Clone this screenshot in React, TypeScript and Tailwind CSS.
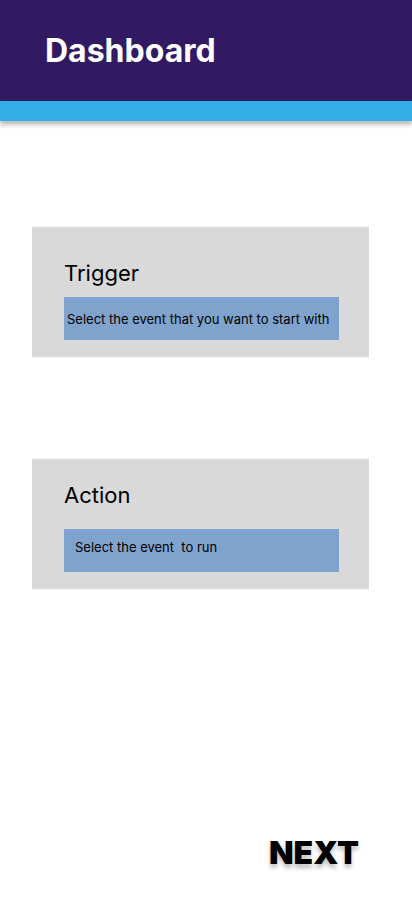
export default function App() {
  return (
    <div className="min-h-[917px] w-full bg-white" style={{ fontFamily: "Inter, 'Noto Sans', sans-serif" }}>
      <header className="relative">
        <div className="flex h-[101px] items-start bg-[#311a62] pl-[45px] pt-[31px]">
          <h1 className="text-[32px] font-bold leading-[39px] text-white">Dashboard</h1>
        </div>
        <div className="h-[20px] bg-[#35ade6] shadow-[0_4px_4px_rgba(0,0,0,0.25)]" />
      </header>

      <main className="flex flex-col px-[32px] pt-[106px]">
        <section className="h-[130px] w-[337px] bg-[#d9d9d9] pl-[32px] pt-[33px]">
          <h2 className="text-[22px] leading-[27px] text-black">Trigger</h2>
          <div className="mt-[10px] flex h-[43px] w-[275px] items-center bg-[#7fa3cd] pl-[3px]">
            <span className="text-[13px] leading-[16px] text-black">Select the event that you want to start with</span>
          </div>
        </section>

        <section className="mt-[102px] h-[130px] w-[337px] bg-[#d9d9d9] pl-[32px] pt-[23px]">
          <h2 className="text-[22px] leading-[27px] text-black">Action</h2>
          <div className="mt-[20px] h-[43px] w-[275px] bg-[#7fa3cd] pl-[11px] pt-[5px]">
            <span className="text-[13px] leading-[16px] text-black">Select the event&nbsp; to run</span>
          </div>
        </section>

        <div className="mt-[245px] flex justify-end pr-[21px]">
          <button
            type="button"
            className="text-[32px] font-black leading-[38px] text-black [text-shadow:0_4px_4px_rgba(0,0,0,0.25)]"
          >
            NEXT
          </button>
        </div>
      </main>
    </div>
  );
}
